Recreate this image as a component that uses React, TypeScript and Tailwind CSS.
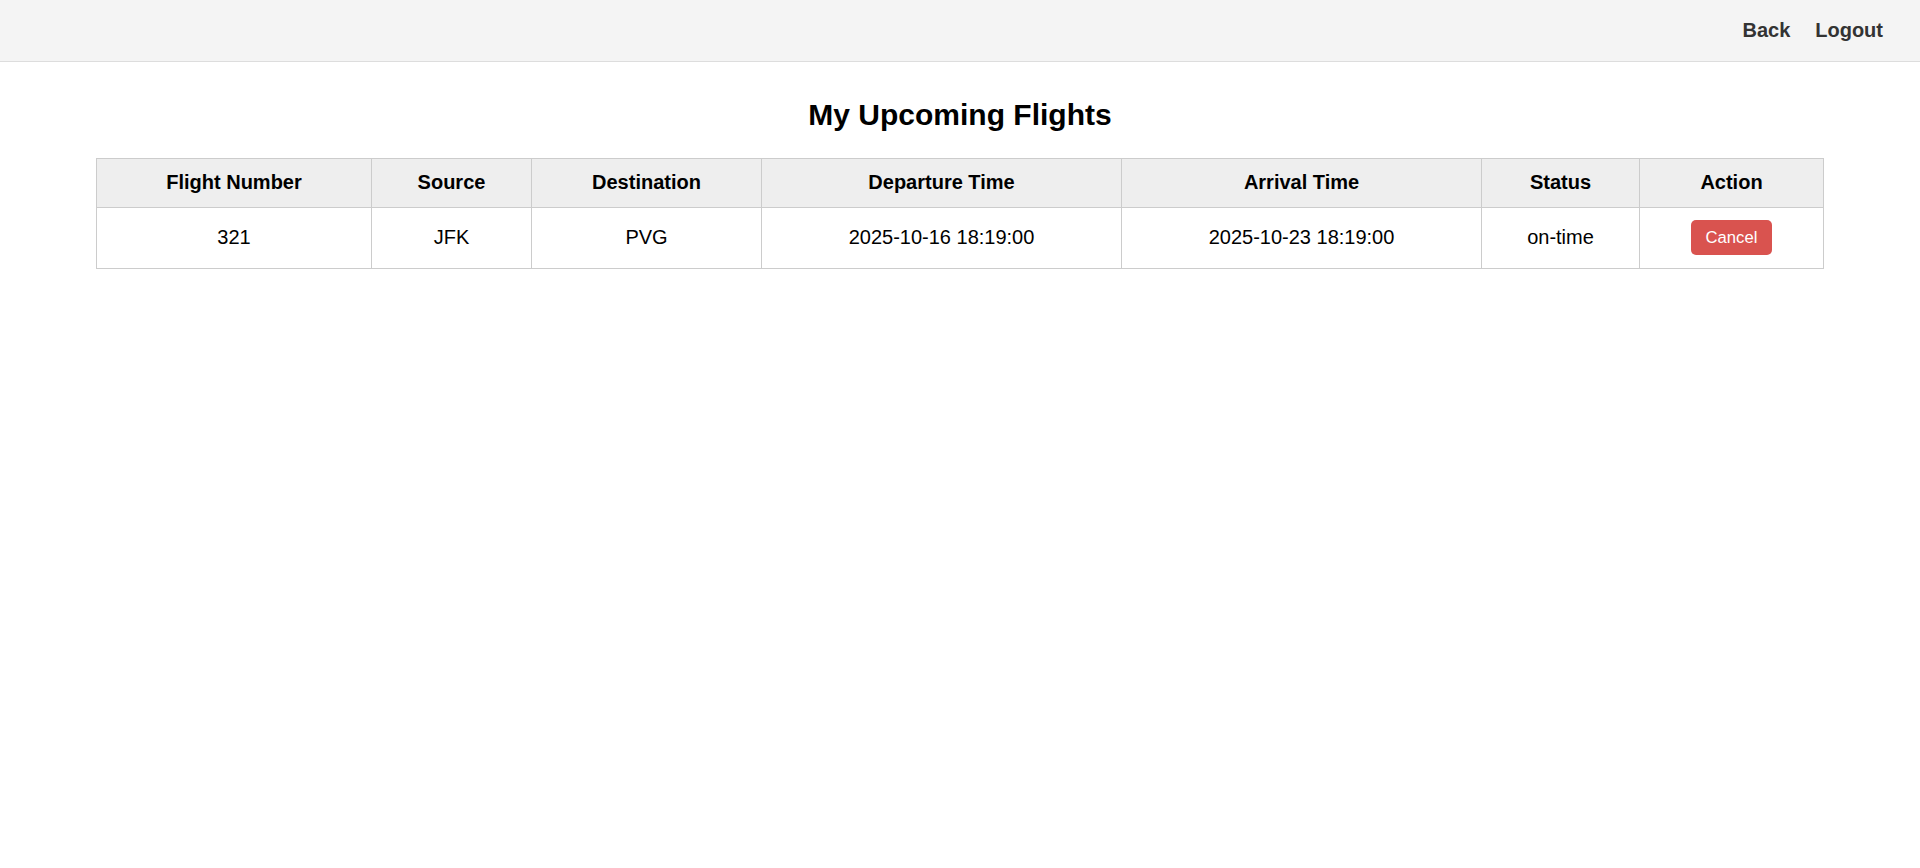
const flights = [
  {
    id: 1,
    flightNumber: '321',
    source: 'JFK',
    destination: 'PVG',
    departure: '2025-10-16 18:19:00',
    arrival: '2025-10-23 18:19:00',
    status: 'on-time',
  },
]

const cell = 'border border-[#cccccc] px-[12.5px] py-[12.5px] text-center align-middle'

export default function App() {
  return (
    <div className="min-h-screen bg-white text-black [font-family:'Liberation_Sans',Arial,sans-serif]">
      {/* Barre du haut */}
      <header className="flex h-[62px] items-center justify-end gap-[25px] border-b border-[#dddddd] bg-[#f4f4f4] pr-[37px]">
        <a href="#" className="text-[20px] leading-[23px] font-bold text-[#333333]">
          Back
        </a>
        <a href="#" className="text-[20px] leading-[23px] font-bold text-[#333333]">
          Logout
        </a>
      </header>

      <main className="pt-[36px]">
        <h2 className="mb-[25px] text-center text-[30px] leading-[34.5px] font-bold">My Upcoming Flights</h2>

        <table className="mx-auto w-[90%] table-fixed border-collapse text-[20px] leading-[23px]">
          <thead>
            <tr className="bg-[#eeeeee]">
              <th className={`${cell} w-[275px] font-bold`}>Flight Number</th>
              <th className={`${cell} w-[160px] font-bold`}>Source</th>
              <th className={`${cell} w-[230px] font-bold`}>Destination</th>
              <th className={`${cell} w-[360px] font-bold`}>Departure Time</th>
              <th className={`${cell} w-[360px] font-bold`}>Arrival Time</th>
              <th className={`${cell} w-[158px] font-bold`}>Status</th>
              <th className={`${cell} font-bold`}>Action</th>
            </tr>
          </thead>
          <tbody>
            {flights.map((f) => (
              <tr key={f.id}>
                <td className={cell}>{f.flightNumber}</td>
                <td className={cell}>{f.source}</td>
                <td className={cell}>{f.destination}</td>
                <td className={cell}>{f.departure}</td>
                <td className={cell}>{f.arrival}</td>
                <td className={cell}>{f.status}</td>
                <td className={cell}>
                  <button className="rounded-[5px] bg-[#d9534f] px-[15px] py-[8px] align-middle text-[16.67px] leading-[19px] text-white">
                    Cancel
                  </button>
                </td>
              </tr>
            ))}
          </tbody>
        </table>
      </main>
    </div>
  )
}
